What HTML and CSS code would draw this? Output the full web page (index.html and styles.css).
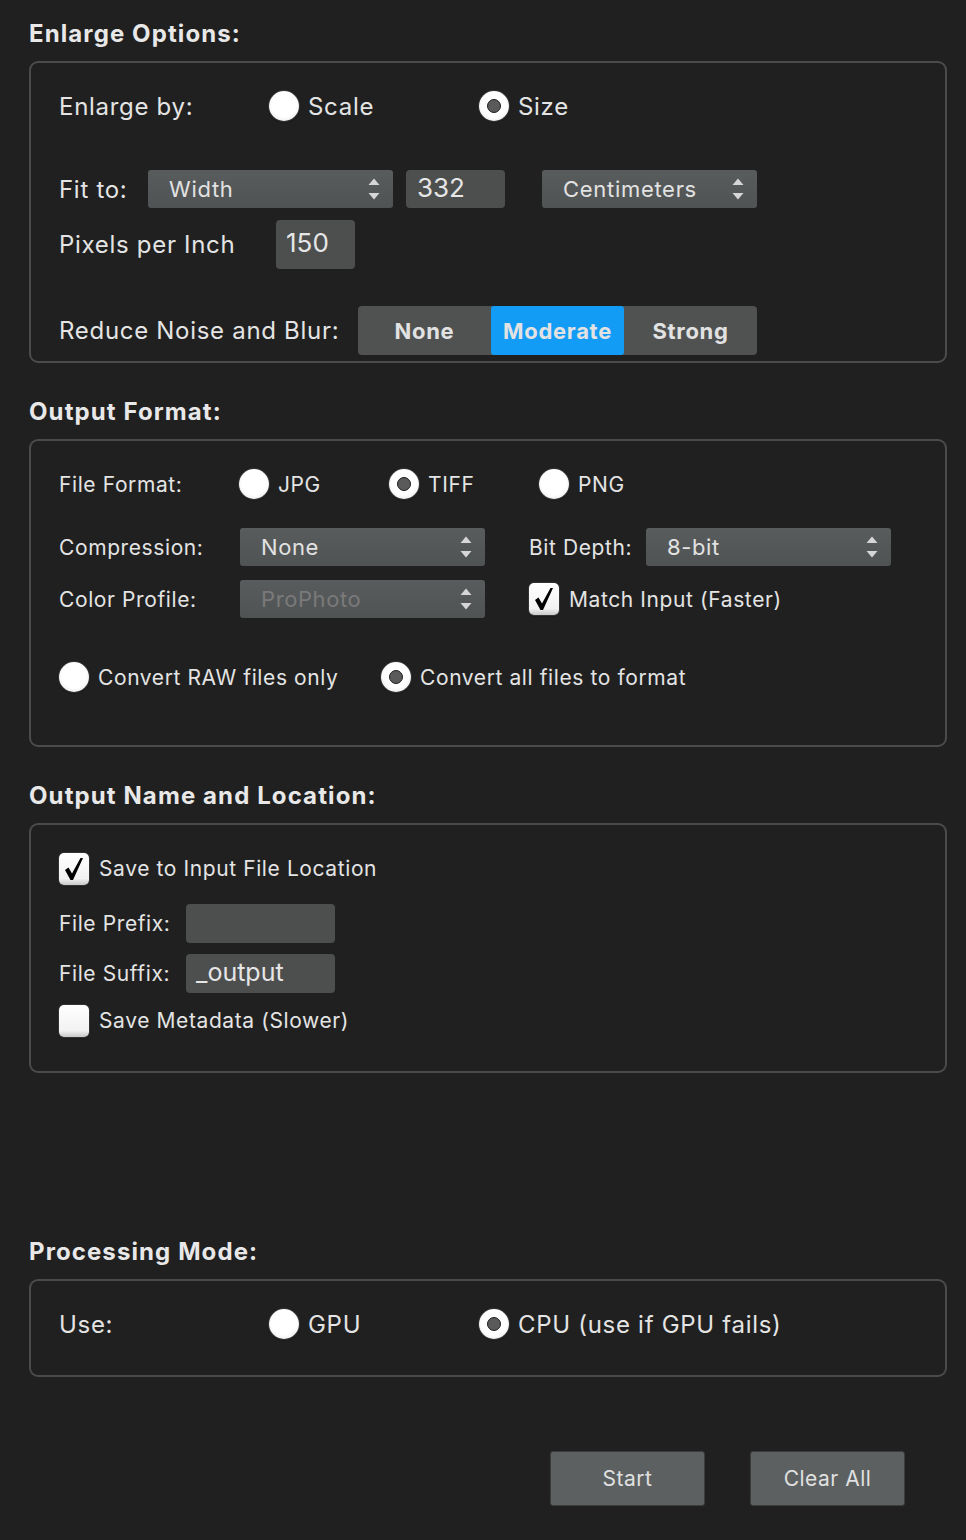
FILE: index.html
```html
<!DOCTYPE html>
<html lang="en">
<head>
  <meta charset="UTF-8" />
  <meta name="viewport" content="width=device-width, initial-scale=1.0"/>
  <title>Enlarge Settings</title>
  <link rel="stylesheet" href="styles.css">
</head>
<body>
  <h2 class="heading">Enlarge Options:</h2>
  <div class="box box-enlarge">
    <div class="row row-enlarge">
      <span class="label w-enlarge">Enlarge by:</span>
      <label class="option w-opt"><span class="radio"></span>Scale</label>
      <label class="option"><span class="radio on"></span>Size</label>
    </div>
    <div class="row row-fit">
      <span class="label w-fit">Fit to:</span>
      <div class="select sel-width">Width<svg class="arrows" viewBox="0 0 12 22"><path d="M0.5 7 L6 0.5 L11.5 7 Z M0.5 15 L6 21.5 L11.5 15 Z"/></svg></div>
      <div class="field field-size">332</div>
      <div class="select sel-unit">Centimeters<svg class="arrows" viewBox="0 0 12 22"><path d="M0.5 7 L6 0.5 L11.5 7 Z M0.5 15 L6 21.5 L11.5 15 Z"/></svg></div>
    </div>
    <div class="row row-ppi">
      <span class="label w-ppi">Pixels per Inch</span>
      <div class="field field-ppi">150</div>
    </div>
    <div class="row row-noise">
      <span class="label w-noise">Reduce Noise and Blur:</span>
      <div class="segment">
        <span class="seg">None</span>
        <span class="seg active">Moderate</span>
        <span class="seg">Strong</span>
      </div>
    </div>
  </div>

  <h2 class="heading">Output Format:</h2>
  <div class="box box-format small">
    <div class="row row-filefmt">
      <span class="label w-fmt">File Format:</span>
      <label class="option w-fmt-opt"><span class="radio"></span>JPG</label>
      <label class="option w-fmt-opt"><span class="radio on"></span>TIFF</label>
      <label class="option"><span class="radio"></span>PNG</label>
    </div>
    <div class="row row-comp">
      <span class="label w-comp">Compression:</span>
      <div class="select sel-comp">None<svg class="arrows" viewBox="0 0 12 22"><path d="M0.5 7 L6 0.5 L11.5 7 Z M0.5 15 L6 21.5 L11.5 15 Z"/></svg></div>
      <span class="label w-bit">Bit Depth:</span>
      <div class="select sel-comp">8-bit<svg class="arrows" viewBox="0 0 12 22"><path d="M0.5 7 L6 0.5 L11.5 7 Z M0.5 15 L6 21.5 L11.5 15 Z"/></svg></div>
    </div>
    <div class="row row-profile">
      <span class="label w-comp">Color Profile:</span>
      <div class="select sel-comp disabled">ProPhoto<svg class="arrows" viewBox="0 0 12 22"><path d="M0.5 7 L6 0.5 L11.5 7 Z M0.5 15 L6 21.5 L11.5 15 Z"/></svg></div>
      <label class="option check-match"><span class="check"><svg viewBox="0 0 30 32"><path d="M6 17 L9.5 14.5 L13 20.5 L21.5 5 L24 5 L14 27 L11.5 27 Z"/></svg></span>Match Input (Faster)</label>
    </div>
    <div class="row row-convert">
      <label class="option w-raw"><span class="radio"></span>Convert RAW files only</label>
      <label class="option"><span class="radio on"></span>Convert all files to format</label>
    </div>
  </div>

  <h2 class="heading">Output Name and Location:</h2>
  <div class="box box-name small">
    <label class="option row-save"><span class="check"><svg viewBox="0 0 30 32"><path d="M6 17 L9.5 14.5 L13 20.5 L21.5 5 L24 5 L14 27 L11.5 27 Z"/></svg></span>Save to Input File Location</label>
    <div class="row row-prefix">
      <span class="label w-name">File Prefix:</span>
      <div class="field field-name"></div>
    </div>
    <div class="row row-suffix">
      <span class="label w-name">File Suffix:</span>
      <div class="field field-name">_output</div>
    </div>
    <label class="option row-meta"><span class="check"></span>Save Metadata (Slower)</label>
  </div>

  <h2 class="heading heading-mode">Processing Mode:</h2>
  <div class="box box-mode">
    <div class="row row-enlarge">
      <span class="label w-enlarge">Use:</span>
      <label class="option w-opt"><span class="radio"></span>GPU</label>
      <label class="option"><span class="radio on"></span>CPU (use if GPU fails)</label>
    </div>
  </div>

  <div class="actions">
    <button class="btn">Start</button>
    <button class="btn">Clear All</button>
  </div>
</body>
</html>
```

FILE: styles.css
```css
body {
  background-color: #202020;
  font-family: Inter, "Noto Sans", sans-serif;
  color: #e4e4e4;
  margin: 0;
  padding: 19px 19px 0 29px;
}

.heading {
  margin: 0 0 12px 0;
  font-size: 24px;
  line-height: 30px;
  font-weight: 700;
  letter-spacing: 1.1px;
  color: #e8e8e8;
}

.heading-mode {
  margin-top: 164px;
}

.box {
  border: 2px solid #4b4b4b;
  border-radius: 9px;
  padding: 0 28px;
  margin-bottom: 34px;
  font-size: 24px;
  letter-spacing: 0.7px;
}

.box.small {
  font-size: 21px;
  letter-spacing: 0.6px;
}

.row {
  display: flex;
  align-items: center;
}

.label {
  flex-shrink: 0;
}

.option {
  display: flex;
  align-items: center;
  gap: 9px;
  flex-shrink: 0;
}

/* Box 1 */
.box-enlarge {
  padding-top: 28px;
  padding-bottom: 6px;
}

.row-enlarge { height: 30px; }
.w-enlarge { width: 210px; }
.w-opt { width: 210px; }

.row-fit { margin-top: 49px; height: 38px; }
.w-fit { width: 89px; }

.row-ppi { margin-top: 12px; height: 49px; }
.w-ppi { width: 217px; }

.row-noise { margin-top: 37px; height: 49px; }
.w-noise { width: 299px; }

/* Controls */
.radio {
  width: 30px;
  height: 30px;
  border-radius: 50%;
  background: radial-gradient(circle at 50% 45%, #ffffff 55%, #f0f0f0 75%, #a8a8a8 100%);
  box-shadow: 0 0 0 1px #333, 0 1px 2px rgba(0, 0, 0, 0.6);
  display: flex;
  align-items: center;
  justify-content: center;
  flex-shrink: 0;
}

.radio.on::after {
  content: "";
  width: 12px;
  height: 12px;
  border-radius: 50%;
  background: #5a5a5a;
  border: 1px solid #1e1e1e;
}

.check {
  width: 30px;
  height: 32px;
  border-radius: 5px;
  background: linear-gradient(#ffffff, #f2f2f2 80%, #c8c8c8);
  box-shadow: 0 0 0 1px #333, 0 1px 2px rgba(0, 0, 0, 0.6);
  display: flex;
  flex-shrink: 0;
}

.check svg {
  width: 30px;
  height: 32px;
  fill: #000;
}

.select {
  height: 38px;
  border-radius: 3px;
  background: linear-gradient(#595c5d, #505354);
  display: flex;
  align-items: center;
  justify-content: space-between;
  padding: 0 13px 0 21px;
  box-sizing: border-box;
  font-size: 22px;
  color: #e2e2e2;
  flex-shrink: 0;
}

.select.disabled {
  color: #7a7a7a;
}

.arrows {
  width: 12px;
  height: 22px;
  fill: #d6d6d6;
}

.sel-width { width: 245px; }
.sel-unit { width: 215px; margin-left: 37px; }

.field {
  background: #4d4e4e;
  border-radius: 4px;
  display: flex;
  align-items: center;
  box-sizing: border-box;
  color: #e6e6e6;
  flex-shrink: 0;
}

.field-size {
  width: 99px;
  height: 38px;
  margin-left: 13px;
  padding: 0 0 4px 11px;
  font-size: 26px;
  letter-spacing: 0;
}

.field-ppi {
  width: 79px;
  height: 49px;
  padding: 0 0 4px 10px;
  font-size: 26px;
  letter-spacing: 0;
}

.segment {
  display: flex;
  width: 399px;
  height: 49px;
  background: #505252;
  border-radius: 4px;
}

.seg {
  flex: 1;
  display: flex;
  align-items: center;
  justify-content: center;
  font-size: 22px;
  font-weight: 700;
  color: #e2e2e2;
  border-radius: 3px;
}

.seg.active {
  background: #139cf6;
}

/* Box 2 */
.box-format {
  padding-top: 28px;
  padding-bottom: 53px;
}

.row-filefmt { height: 30px; }
.w-fmt { width: 180px; }
.w-fmt-opt { width: 150px; }

.row-comp { margin-top: 29px; height: 38px; }
.row-profile { margin-top: 14px; height: 38px; }
.w-comp { width: 181px; }
.w-bit { width: 117px; margin-left: 44px; }
.sel-comp { width: 245px; }
.check-match { margin-left: 44px; gap: 10px; }

.row-convert { margin-top: 44px; height: 30px; }
.w-raw { width: 322px; }

/* Box 3 */
.box-name {
  padding-top: 27px;
  padding-bottom: 34px;
}

.row-save { height: 33px; gap: 10px; }
.row-prefix { margin-top: 19px; height: 39px; }
.row-suffix { margin-top: 11px; height: 39px; }
.row-meta { margin-top: 11px; height: 33px; gap: 10px; }
.w-name { width: 127px; }

.field-name {
  width: 149px;
  height: 39px;
  padding: 0 0 4px 10px;
  font-size: 25px;
  letter-spacing: 0;
}

/* Box 4 */
.box-mode {
  padding-top: 28px;
  padding-bottom: 36px;
}

.actions {
  display: flex;
  justify-content: flex-end;
  gap: 45px;
  margin-top: 74px;
  padding-right: 42px;
}

.btn {
  width: 155px;
  height: 55px;
  border: 1px solid #3a3c3d;
  border-radius: 3px;
  background: #5c6061;
  color: #e0e0e0;
  font-family: Inter, "Noto Sans", sans-serif;
  font-size: 21px;
  letter-spacing: 0.5px;
  cursor: pointer;
}
```
